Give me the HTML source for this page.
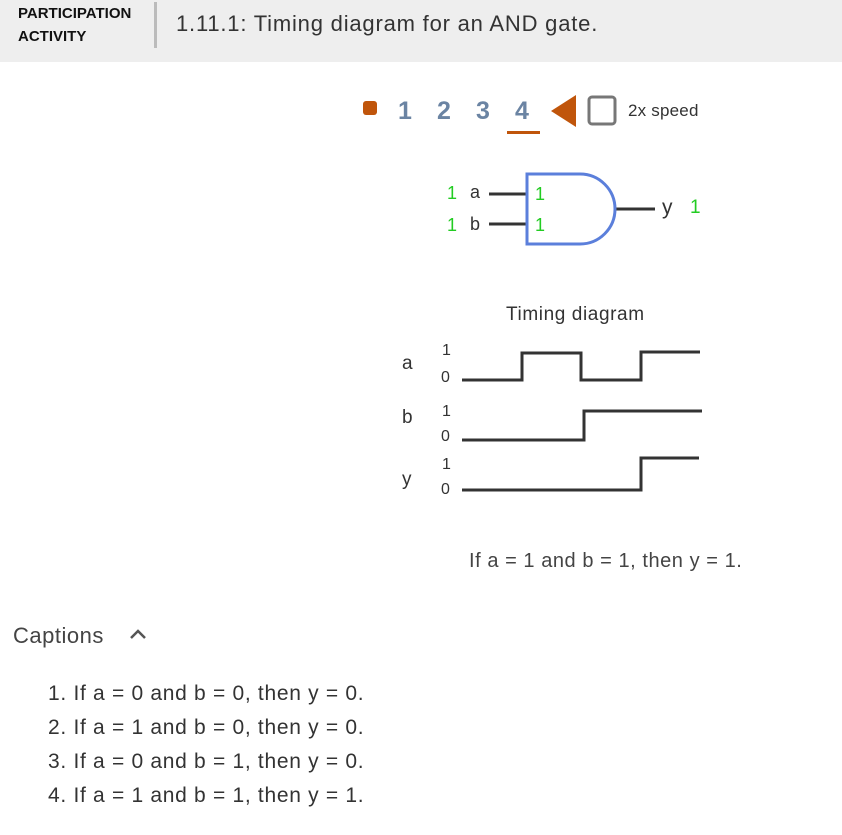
<!DOCTYPE html>
<html><head><meta charset="utf-8"><style>
body{margin:0;width:842px;height:835px;background:#fff;font-family:"Liberation Sans",sans-serif;position:relative;overflow:hidden;color:#333}
.hdr{position:absolute;left:0;top:0;width:842px;height:62px;background:#eeeeee}
.pa{position:absolute;left:18px;top:2px;font-weight:bold;font-size:15px;line-height:23px;color:#111}
.div{position:absolute;left:154px;top:2px;width:3px;height:46px;background:#bbb}
.title{position:absolute;left:176px;top:11px;font-size:22px;color:#333;letter-spacing:0.8px}
.t{position:absolute;white-space:nowrap}
</style></head><body>
<div class="hdr"><div class="pa">PARTICIPATION<br>ACTIVITY</div><div class="div"></div><div class="title">1.11.1: Timing diagram for an AND gate.</div></div>

<svg width="842" height="835" style="position:absolute;left:0;top:0">
<rect x="363" y="101" width="14" height="14" rx="3" fill="#c0550b"/>
<polygon points="576,95 576,127 551,111" fill="#c0550b"/>
<rect x="589" y="97" width="26" height="27" rx="3" fill="none" stroke="#777" stroke-width="3"/>
<rect x="507" y="131" width="33" height="3" fill="#c0550b"/>
<g stroke="#333" stroke-width="3" fill="none">
<line x1="489" y1="194" x2="527" y2="194"/>
<line x1="489" y1="224" x2="527" y2="224"/>
<line x1="615" y1="209" x2="655" y2="209"/>
<polyline points="462,380 522,380 522,353 581,353 581,380 641,380 641,352 700,352"/>
<polyline points="462,440 584,440 584,411 702,411"/>
<polyline points="462,490 641,490 641,458 699,458"/>
</g>
<path d="M527,174 H580 A35,35 0 0 1 580,244 H527 Z" fill="none" stroke="#5b7fdb" stroke-width="3"/>
</svg>

<div class="t" style="left:398px;top:97px;font-size:25px;font-weight:bold;color:#6b84a3">1</div>
<div class="t" style="left:437px;top:97px;font-size:25px;font-weight:bold;color:#6b84a3">2</div>
<div class="t" style="left:476px;top:97px;font-size:25px;font-weight:bold;color:#6b84a3">3</div>
<div class="t" style="left:515px;top:97px;font-size:25px;font-weight:bold;color:#6b84a3">4</div>
<div class="t" style="left:628px;top:101px;font-size:17px;color:#333;letter-spacing:0.2px">2x speed</div>

<div class="t" style="left:447px;top:183px;font-size:18px;color:#22cc22">1</div>
<div class="t" style="left:470px;top:182px;font-size:18px">a</div>
<div class="t" style="left:447px;top:215px;font-size:18px;color:#22cc22">1</div>
<div class="t" style="left:470px;top:214px;font-size:18px">b</div>
<div class="t" style="left:535px;top:184px;font-size:18px;color:#22cc22">1</div>
<div class="t" style="left:535px;top:215px;font-size:18px;color:#22cc22">1</div>
<div class="t" style="left:662px;top:196px;font-size:21px">y</div>
<div class="t" style="left:690px;top:197px;font-size:19px;color:#22cc22">1</div>

<div class="t" style="left:506px;top:304px;font-size:19px;color:#333;letter-spacing:0.6px">Timing diagram</div>
<div class="t" style="left:402px;top:353px;font-size:19px">a</div>
<div class="t" style="left:402px;top:407px;font-size:19px">b</div>
<div class="t" style="left:402px;top:469px;font-size:19px">y</div>
<div class="t" style="left:442px;top:342px;font-size:16px">1</div>
<div class="t" style="left:441px;top:369px;font-size:16px">0</div>
<div class="t" style="left:442px;top:403px;font-size:16px">1</div>
<div class="t" style="left:441px;top:428px;font-size:16px">0</div>
<div class="t" style="left:442px;top:456px;font-size:16px">1</div>
<div class="t" style="left:441px;top:481px;font-size:16px">0</div>

<div class="t" style="left:469px;top:550px;font-size:20px;color:#444;letter-spacing:0.55px">If a = 1 and b = 1, then y = 1.</div>

<div class="t" style="left:13px;top:623px;font-size:22px;color:#444;letter-spacing:0.5px">Captions</div>
<svg width="20" height="14" style="position:absolute;left:128px;top:627px"><polyline points="3,11 10,4 17,11" fill="none" stroke="#555" stroke-width="2.5"/></svg>

<div class="t" style="left:48px;top:677px;font-size:21px;line-height:34px;color:#333;letter-spacing:0.7px">1. If a = 0 and b = 0, then y = 0.<br>2. If a = 1 and b = 0, then y = 0.<br>3. If a = 0 and b = 1, then y = 0.<br>4. If a = 1 and b = 1, then y = 1.</div>
</body></html>
